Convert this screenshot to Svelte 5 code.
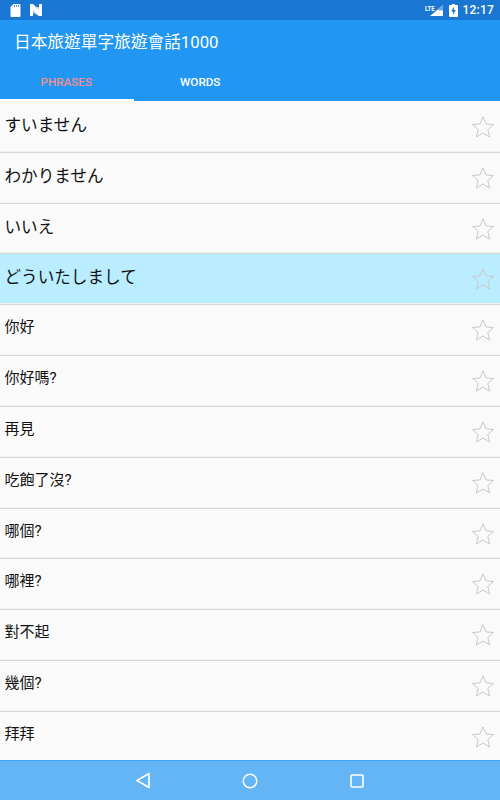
<script>
  const rows = [
    ['すいません', true], ['わかりません', true], ['いいえ', true], ['どういたしまして', true, true],
    ['你好'], ['你好嗎?'], ['再見'], ['吃飽了沒?'], ['哪個?'], ['哪裡?'], ['對不起'], ['幾個?'], ['拜拜']
  ];
</script>

<div class="screen">
  <div class="status">
    <div class="status-left">
      <svg width="11" height="13" viewBox="0 0 11 13"><path d="M3.500 0H9.500a1 1 0 0 1 1 1v11a1 1 0 0 1-1 1H1.500a1 1 0 0 1-1-1V3z" fill="#fff"/><path d="M4 1.200h1v1.600H4zM6 1.200h1v1.600H6zM8 1.200h1v1.600H8z" fill="#1976d2"/></svg>
      <svg width="12" height="12" viewBox="0 0 12 12"><path d="M0 0h3v12H0zM9 0h3v12H9z" fill="#fff"/><path d="M3 3l6 6V3z M3 3v6l6 3V9z" fill="#a9cbef"/><path d="M0 0h3l9 9v3H9L0 3z" fill="#fff"/></svg>
    </div>
    <div class="status-right">
      <span class="lte">LTE</span>
      <svg class="signal" width="13" height="11" viewBox="0 0 13 11"><path d="M13 0v11H0z" fill="#fff"/><path d="M13 0v5.500L7 5z" fill="#6ea6e2"/></svg>
      <svg class="batt" width="9" height="13" viewBox="0 0 9 13"><path d="M3 0h3v1h2a1 1 0 0 1 1 1v10a1 1 0 0 1-1 1H1a1 1 0 0 1-1-1V2a1 1 0 0 1 1-1h2z" fill="#fff"/><path d="M5 2.800 2.200 7.500H4v3.200L6.800 6H5z" fill="#1976d2"/></svg>
      <span class="clock">12:17</span>
    </div>
  </div>

  <div class="toolbar">日本旅遊單字旅遊會話1000</div>

  <div class="tabs">
    <div class="tab active">PHRASES</div>
    <div class="tab">WORDS</div>
  </div>

  <div class="list">
    {#each rows as [text, jp, hi]}
      <div class="row" class:hi>
        <span class="label" class:jp>{text}</span>
        <svg class="star" width="24" height="24" viewBox="0 0 24 24"><path d="M12 1.800l3 7.100 7.500.6-5.700 5 1.800 7.500L12 18l-6.600 4 1.800-7.500-5.700-5 7.500-.6z" fill="none" stroke="#c9c9c9" stroke-width="1"/></svg>
      </div>
    {/each}
  </div>

  <div class="nav">
    <svg width="16" height="17" viewBox="0 0 16 17"><path d="M14 1.500v14L2 8.500z" fill="none" stroke="#fff" stroke-width="1.600" stroke-linejoin="round"/></svg>
    <svg width="16" height="16" viewBox="0 0 16 16"><circle cx="8" cy="8" r="6.800" fill="none" stroke="#fff" stroke-width="1.500"/></svg>
    <svg width="14" height="14" viewBox="0 0 14 14"><rect x="1" y="1" width="12" height="12" rx="1" fill="none" stroke="#fff" stroke-width="1.600"/></svg>
  </div>
</div>

<style>
  :global(body) { margin: 0; }
  .screen {
    width: 500px; height: 800px; overflow: hidden; display: flex; flex-direction: column;
    background: #fafafa; font-family: Roboto, "Noto Sans CJK TC", sans-serif;
  }
  .status {
    height: 20px; flex: none; background: #1976d2; display: flex; justify-content: space-between;
    align-items: center; padding: 0 6px 0 10px; color: #fff; box-sizing: border-box;
  }
  .status-left { display: flex; align-items: center; gap: 9px; }
  .status-right { display: flex; align-items: center; position: relative; }
  .lte { position: absolute; left: -5px; top: 2px; font-size: 7px; font-weight: 700; line-height: 8px; transform: scaleX(.85); transform-origin: left; }
  .batt { margin-left: 6px; }
  .clock { margin-left: 5px; font-size: 12px; font-weight: 500; letter-spacing: .2px; }
  .toolbar {
    height: 43px; flex: none; background: #2196f3; color: #fff; font-size: 16.700px; line-height: 45px;
    padding-left: 14px; box-sizing: border-box;
  }
  .tabs { height: 38px; flex: none; background: #2196f3; display: flex; }
  .tab {
    width: 133.500px; box-sizing: border-box; text-align: center; color: #fff; font-size: 11.670px; font-weight: 500;
    line-height: 39px;
  }
  .tab.active { color: #ef8f8f; border-bottom: 2px solid #fff; padding-right: 1px; }
  .list { flex: 1; min-height: 0; overflow: hidden; padding-top: 1px; }
  .row {
    height: 50.830px; box-sizing: border-box; border-bottom: 1px solid #d9d9d9; box-shadow: inset 0 -1px 0 #f0f0f0; display: flex; align-items: center;
    justify-content: space-between; padding: 0 5px 0 4.500px;
  }
  .row.hi { background: #b9edff; }
  .label { font-size: 15px; color: #111; margin-top: -9px; }
  .label.jp { font-size: 16.600px; margin-top: -6px; }
  .star { margin-top: 0; }
  .nav {
    height: 40px; flex: none; background: #64b5f6; border-top: 1px solid #42a5f5; box-sizing: border-box;
    display: grid; grid-template-columns: 1fr 1fr 1fr; justify-items: center; align-items: center; padding: 0 89.500px;
  }
</style>
